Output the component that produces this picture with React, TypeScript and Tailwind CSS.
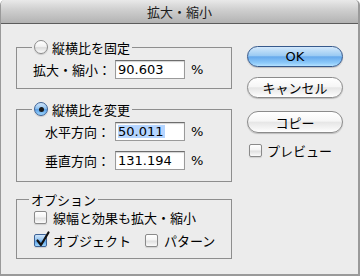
import React from "react";

const jp = "font-['Noto_Sans_CJK_JP','Noto_Sans_CJK_SC',sans-serif]";
const num = "font-['DejaVu_Sans','Liberation_Sans',sans-serif]";

const Radio = ({ on }: { on?: boolean }) => (
  <span
    className={`relative flex items-center justify-center w-[14px] h-[14px] rounded-full border shrink-0 ${
      on
        ? "border-[#3d6296] bg-[linear-gradient(to_bottom,#cfe5fa_0%,#92c3f0_45%,#5ba0e6_55%,#9ed6fd_100%)]"
        : "border-[#8a8a8a] bg-[linear-gradient(to_bottom,#ffffff_0%,#f2f2f2_45%,#dcdcdc_55%,#fafafa_100%)]"
    } shadow-[0_1px_1px_rgba(0,0,0,0.15)]`}
  >
    {on && <span className="w-[5px] h-[5px] rounded-full bg-[#1a1a1a]" />}
  </span>
);

const Check = ({ on }: { on?: boolean }) => (
  <span
    className={`relative w-[13px] h-[13px] rounded-[2px] border shrink-0 ${
      on
        ? "border-[#3d6296] bg-[linear-gradient(to_bottom,#cfe5fa_0%,#92c3f0_45%,#5ba0e6_55%,#9ed6fd_100%)]"
        : "border-[#8a8a8a] bg-[linear-gradient(to_bottom,#ffffff_0%,#f4f4f4_45%,#e0e0e0_55%,#fbfbfb_100%)]"
    } shadow-[0_1px_1px_rgba(0,0,0,0.12)]`}
  >
    {on && (
      <svg
        className="absolute left-[1px] top-[-4px] overflow-visible"
        width="14"
        height="16"
        viewBox="0 0 14 16"
      >
        <path
          d="M1.5 9.5 L5 14 L12.5 1.5"
          fill="none"
          stroke="#111"
          strokeWidth="2.2"
          strokeLinecap="round"
          strokeLinejoin="round"
        />
      </svg>
    )}
  </span>
);

const AquaButton = ({
  children,
  primary,
  className = "",
}: {
  children: React.ReactNode;
  primary?: boolean;
  className?: string;
}) => (
  <button
    className={`w-[96px] h-[21px] rounded-full border flex items-center justify-center text-[13px] leading-none text-black ${
      primary
        ? "border-[#36598c] bg-[linear-gradient(to_bottom,#d3e8fb_0%,#9ccbf3_45%,#66a9ec_52%,#8fcbfa_85%,#b6e2ff_100%)]"
        : "border-[#8b8b8b] bg-[linear-gradient(to_bottom,#ffffff_0%,#f6f6f6_45%,#e6e6e6_52%,#f6f6f6_85%,#ffffff_100%)]"
    } shadow-[0_1px_1px_rgba(0,0,0,0.2)] ${className}`}
  >
    {children}
  </button>
);

const Field = ({ value, selected }: { value: string; selected?: boolean }) => (
  <div
    className={`w-[70px] h-[19px] bg-white border border-[#9a9a9a] border-t-[#6d6d6d] shadow-[inset_0_1px_1px_rgba(0,0,0,0.18)] flex items-center pl-[2px] text-[13px] leading-none text-black ${num}`}
  >
    <span className={selected ? "bg-[#b5d5ff] pr-[1px]" : ""}>{value}</span>
  </div>
);

const Row = ({
  label,
  labelW,
  pl,
  value,
  selected,
}: {
  label: string;
  labelW: string;
  pl: string;
  value: string;
  selected?: boolean;
}) => (
  <div className={`flex items-center h-[19px] ${pl}`}>
    <span className={`${labelW} text-[13px] leading-none ${jp}`}>{label}</span>
    <Field value={value} selected={selected} />
    <span className={`ml-[6px] text-[13px] leading-none ${num}`}>%</span>
  </div>
);

const CheckItem = ({ on, label, className = "" }: { on?: boolean; label: string; className?: string }) => (
  <div className={`flex items-center gap-[6px] ${className}`}>
    <Check on={on} />
    <span className={`text-[13px] leading-none ${jp}`}>{label}</span>
  </div>
);

export default function App() {
  return (
    <div className="w-[360px] h-[276px] bg-white">
      <div className="h-full flex flex-col bg-[#ececec] rounded-t-[5px] overflow-hidden border-l border-r-2 border-b-2 border-[#9a9a9a]">
        <div
          className={`h-[24px] shrink-0 flex items-center justify-center border-b border-[#5c5c5c] bg-[linear-gradient(to_bottom,#e9e9e9_0%,#d0d0d0_40%,#b3b3b3_100%)] text-[13px] leading-none text-[#1e1e1e] ${jp}`}
        >
          拡大・縮小
        </div>

        <div className="flex flex-1">
          <div className="pl-[15px] flex flex-col">
            <fieldset className="mt-[13px] w-[216px] border border-[#8e8e8e] pb-[9px]">
              <legend className="ml-[15px] px-[2px]">
                <span className="flex items-center h-[20px] gap-[4px]">
                  <Radio />
                  <span className={`text-[13px] leading-none ${jp}`}>縦横比を固定</span>
                </span>
              </legend>
              <div className="pt-[2px]">
                <div className="h-[20px] flex items-center">
                  <Row label="拡大・縮小：" labelW="w-[82px]" pl="pl-[16px]" value="90.603" />
                </div>
              </div>
            </fieldset>

            <fieldset className="mt-[10px] w-[216px] border border-[#8e8e8e] pb-[11px]">
              <legend className="ml-[15px] px-[2px]">
                <span className="flex items-center h-[20px] gap-[4px]">
                  <Radio on />
                  <span className={`text-[13px] leading-none ${jp}`}>縦横比を変更</span>
                </span>
              </legend>
              <div className="pt-[3px] flex flex-col gap-[10px]">
                <Row label="水平方向：" labelW="w-[70px]" pl="pl-[28px]" value="50.011" selected />
                <Row label="垂直方向：" labelW="w-[70px]" pl="pl-[28px]" value="131.194" />
              </div>
            </fieldset>

            <fieldset className="mt-[7px] w-[216px] border border-[#8e8e8e] pb-[10px]">
              <legend className="ml-[12px] px-[2px]">
                <span className={`flex items-center h-[20px] text-[13px] leading-none ${jp}`}>オプション</span>
              </legend>
              <div className="flex flex-col gap-[7px] pl-[17px]">
                <div className="h-[16px] flex items-center">
                  <CheckItem label="線幅と効果も拡大・縮小" />
                </div>
                <div className="h-[16px] flex items-center">
                  <CheckItem on label="オブジェクト" className="w-[111px]" />
                  <CheckItem label="パターン" />
                </div>
              </div>
            </fieldset>
          </div>

          <div className="pl-[15px] flex flex-col">
            <AquaButton primary className={`mt-[22px] ${num}`}>
              OK
            </AquaButton>
            <AquaButton className={`mt-[10px] ${jp}`}>キャンセル</AquaButton>
            <AquaButton className={`mt-[13px] h-[22px] ${jp}`}>コピー</AquaButton>
            <div className="mt-[11px] ml-[2px] flex items-center gap-[5px]">
              <Check />
              <span className={`text-[13px] leading-none ${jp}`}>プレビュー</span>
            </div>
          </div>
        </div>
      </div>
    </div>
  );
}
